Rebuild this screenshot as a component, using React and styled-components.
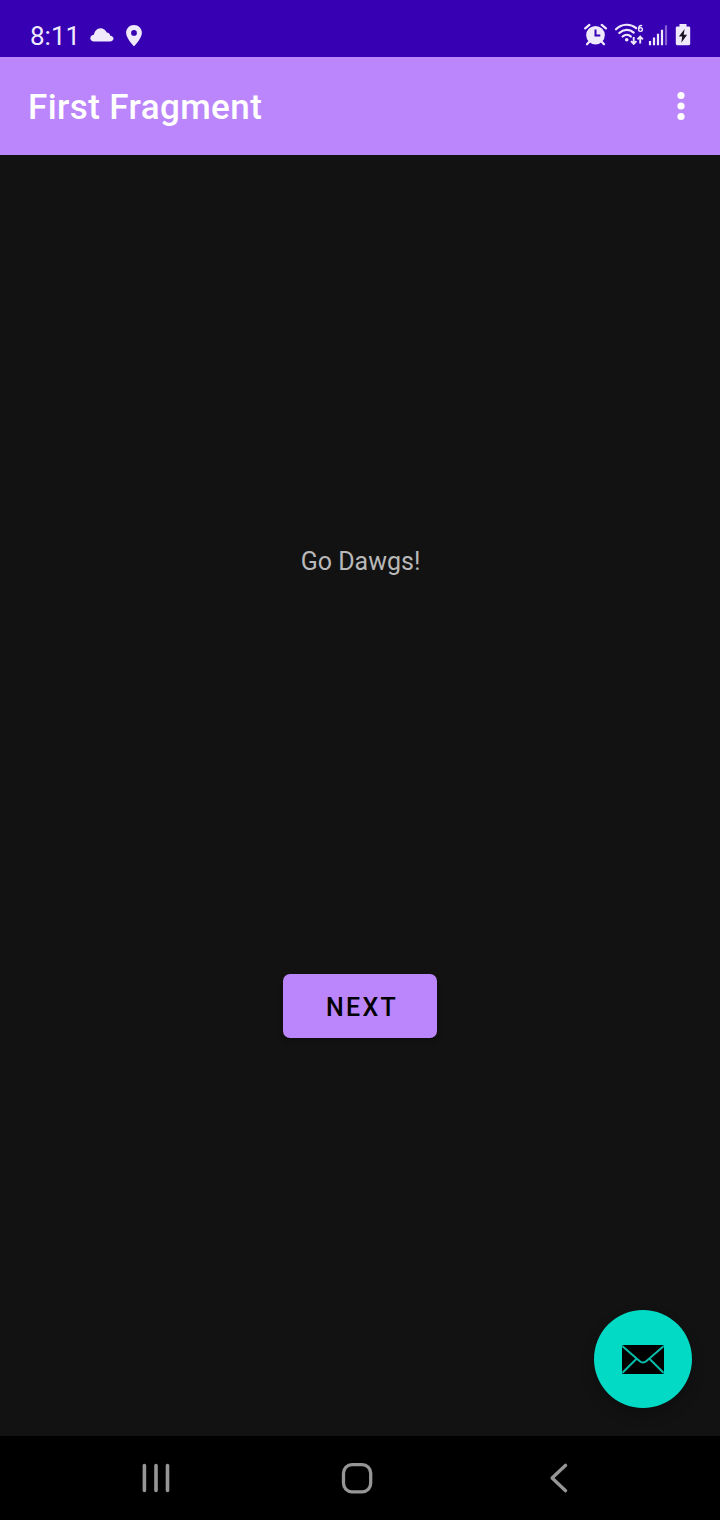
import React from "react";
import styled, { createGlobalStyle } from "styled-components";

const GlobalStyle = createGlobalStyle`
  * { box-sizing: border-box; }
  body { margin: 0; background: #121212; }
`;

const Screen = styled.div`
  display: flex;
  flex-direction: column;
  width: 720px;
  height: 1520px;
  overflow: hidden;
  background: #121212;
  font-family: Roboto, "Noto Sans", sans-serif;
`;

const StatusBar = styled.header`
  display: flex;
  justify-content: space-between;
  height: 57px;
  padding: 20px 29px 0 30px;
  background: #3700b3;
  color: #efe9fb;
`;

const StatusGroup = styled.div`
  display: flex;
  height: 30px;
`;

const Clock = styled.time`
  width: 58px;
  font-size: 26px;
  line-height: 32px;
  letter-spacing: 0;
`;

const Icon = styled.svg`
  display: block;
  flex: none;
  width: ${(p) => p.$w}px;
  height: ${(p) => p.$h}px;
  overflow: visible;
`;

const AppBar = styled.div`
  display: flex;
  align-items: center;
  justify-content: space-between;
  height: 98px;
  padding: 0 27px 0 28px;
  background: #bb86fc;
  color: #ffffff;
`;

const Title = styled.h1`
  margin: 4px 0 0;
  font-size: 35px;
  font-weight: 500;
  line-height: 42px;
  letter-spacing: 0.4px;
`;

const IconButton = styled.button`
  display: flex;
  padding: 0;
  border: 0;
  background: none;
  color: inherit;
`;

const Content = styled.main`
  position: relative;
  display: flex;
  flex: 1;
  flex-direction: column;
  align-items: center;
  padding-top: 390px;
`;

const Message = styled.p`
  margin: 0 0 396px;
  padding-left: 1px;
  color: #b8b8b8;
  font-size: 25px;
  line-height: 33px;
`;

const NextButton = styled.button`
  width: 154px;
  height: 64px;
  padding: 4px 0 0 4px;
  border: 0;
  border-radius: 7px;
  background: #bb86fc;
  box-shadow: 0 3px 5px rgba(0, 0, 0, 0.25);
  color: #000000;
  font: 500 25px/30px Roboto, sans-serif;
  letter-spacing: 2.3px;
`;

const Fab = styled.button`
  position: absolute;
  right: 28px;
  bottom: 28px;
  display: flex;
  align-items: center;
  justify-content: center;
  width: 98px;
  height: 98px;
  padding: 0;
  border: 0;
  border-radius: 50%;
  background: #03dac5;
  box-shadow: 0 7px 14px rgba(0, 0, 0, 0.22);
`;

const NavBar = styled.nav`
  display: flex;
  justify-content: space-between;
  height: 84px;
  padding: 24px 148px 0 140px;
  background: #000000;
  color: #969696;
`;

const CloudIcon = () => (
  <Icon $w={26} $h={30} viewBox="88 20 26 30">
    <path fill="currentColor" d="M94 41.500C91.800 41.500 90.300 40.200 90.300 38.300c0-1.900 1.600-3.300 3.600-3.500C94.500 31 97.200 28.200 100.500 28.200c2.800 0 5.100 1.700 6.200 4.200 2 .2 3.300 1.400 3.600 3.300 1.900.2 3.200 1.300 3.200 2.900 0 1.700-1.400 2.900-3.500 2.900z" />
  </Icon>
);

const PinIcon = () => (
  <Icon $w={30} $h={30} viewBox="114 20 30 30">
    <path fill="currentColor" fillRule="evenodd" d="M134 25c-4.400 0-7.900 3.500-7.900 7.700 0 5.600 7.900 13.600 7.900 13.600s7.900-8 7.900-13.600c0-4.200-3.500-7.700-7.900-7.700zm0 5a2.900 2.900 0 1 1 0 5.800 2.900 2.900 0 0 1 0-5.800z" />
  </Icon>
);

const AlarmIcon = () => (
  <Icon $w={32} $h={30} viewBox="583 20 32 30">
    <circle cx="595.500" cy="35.200" r="9.300" fill="currentColor" />
    <path d="M585.200 28.400l4.200-3.500M605.900 28.400l-4.200-3.500M589.500 41.500l-2.500 2.700M601.500 41.500l2.500 2.700" fill="none" stroke="currentColor" strokeWidth="2.300" strokeLinecap="round" />
    <path d="M595.500 29.500v6h4.800" fill="none" stroke="#3700b3" strokeWidth="2" />
  </Icon>
);

const WifiIcon = () => (
  <Icon $w={32} $h={30} viewBox="615 20 32 30">
    <g fill="none" stroke="currentColor" strokeWidth="2.200" strokeLinecap="round">
      <path d="M616 29.300c5.800-5.700 14.400-6 20.200-1.100M619.300 33c4.200-4 10.200-4.200 14.400-.4M622.600 36.500c2.500-2.300 5.900-2.300 8.300 0" />
    </g>
    <circle cx="626.700" cy="39.800" r="1.800" fill="currentColor" />
    <g fill="none" stroke="currentColor" strokeWidth="1.900">
      <path d="M633.700 37v6.500M631 41.200l2.700 2.800 2.700-2.800M640.200 43.500V37M637.500 39.400l2.700-2.800 2.700 2.800" />
      <path d="M642.200 25.700c-2.300-.7-3.600.8-3.600 3" strokeWidth="1.400" />
      <ellipse cx="640.500" cy="29.600" rx="1.900" ry="1.800" strokeWidth="1.400" />
    </g>
  </Icon>
);

const SignalIcon = () => (
  <Icon $w={28} $h={30} viewBox="647 20 28 30">
    <path d="M650 41v4.200M654 37.600v7.600M658 33.700v11.500M662 29.700v15.500" stroke="currentColor" strokeWidth="2.200" />
    <path d="M666 25.300v19.900" stroke="#865fd2" strokeWidth="2.200" />
  </Icon>
);

const BatteryIcon = () => (
  <Icon $w={16} $h={30} viewBox="675 20 16 30">
    <path d="M679.500 24h7v2.400h2.300q1.400 0 1.400 1.400v16q0 1.400-1.400 1.400h-11.600q-1.400 0-1.400-1.400v-16q0-1.400 1.400-1.400h2.300z" fill="currentColor" />
    <path d="M684.600 29l-5.700 7.400h3.300l-.9 6.300 5.800-7.900h-3.400z" fill="#16111e" />
  </Icon>
);

const OverflowIcon = () => (
  <Icon $w={24} $h={32} viewBox="0 0 24 32" fill="currentColor">
    <circle cx="12" cy="5.500" r="3.600" />
    <circle cx="12" cy="16" r="3.600" />
    <circle cx="12" cy="26.500" r="3.600" />
  </Icon>
);

const MailIcon = () => (
  <Icon $w={42} $h={29} viewBox="0 0 42 29">
    <rect width="42" height="29" rx="1.500" fill="#000000" />
    <path d="M.5 1.200L17.500 16Q21 19 24.500 16L41.500 1.200M.5 27.800L14.300 14M41.500 27.800L27.700 14" fill="none" stroke="#05bcab" strokeWidth="2" />
  </Icon>
);

const RecentsIcon = () => (
  <Icon $w={32} $h={36} viewBox="140 1460 32 36">
    <g stroke="currentColor" strokeWidth="3.600" strokeLinecap="round">
      <path d="M144.400 1465.500v25M156 1465.500v25M167.500 1465.500v25" />
    </g>
  </Icon>
);

const HomeIcon = () => (
  <Icon $w={36} $h={36} viewBox="341 1460 36 36">
    <rect x="343.500" y="1464.600" width="27.200" height="27.200" rx="8.500" fill="none" stroke="currentColor" strokeWidth="3.300" />
  </Icon>
);

const BackIcon = () => (
  <Icon $w={26} $h={36} viewBox="546 1460 26 36">
    <path d="M565.600 1465.300l-13.500 12.700 13.500 12.700" fill="none" stroke="currentColor" strokeWidth="3.300" strokeLinecap="round" strokeLinejoin="round" />
  </Icon>
);

export default function App() {
  return (
    <Screen>
      <GlobalStyle />
      <StatusBar>
        <StatusGroup>
          <Clock>8:11</Clock>
          <CloudIcon />
          <PinIcon />
        </StatusGroup>
        <StatusGroup>
          <AlarmIcon />
          <WifiIcon />
          <SignalIcon />
          <BatteryIcon />
        </StatusGroup>
      </StatusBar>
      <AppBar>
        <Title>First Fragment</Title>
        <IconButton aria-label="More options"><OverflowIcon /></IconButton>
      </AppBar>
      <Content>
        <Message>Go Dawgs!</Message>
        <NextButton>NEXT</NextButton>
        <Fab aria-label="Send mail"><MailIcon /></Fab>
      </Content>
      <NavBar>
        <IconButton aria-label="Recent apps"><RecentsIcon /></IconButton>
        <IconButton aria-label="Home"><HomeIcon /></IconButton>
        <IconButton aria-label="Back"><BackIcon /></IconButton>
      </NavBar>
    </Screen>
  );
}
